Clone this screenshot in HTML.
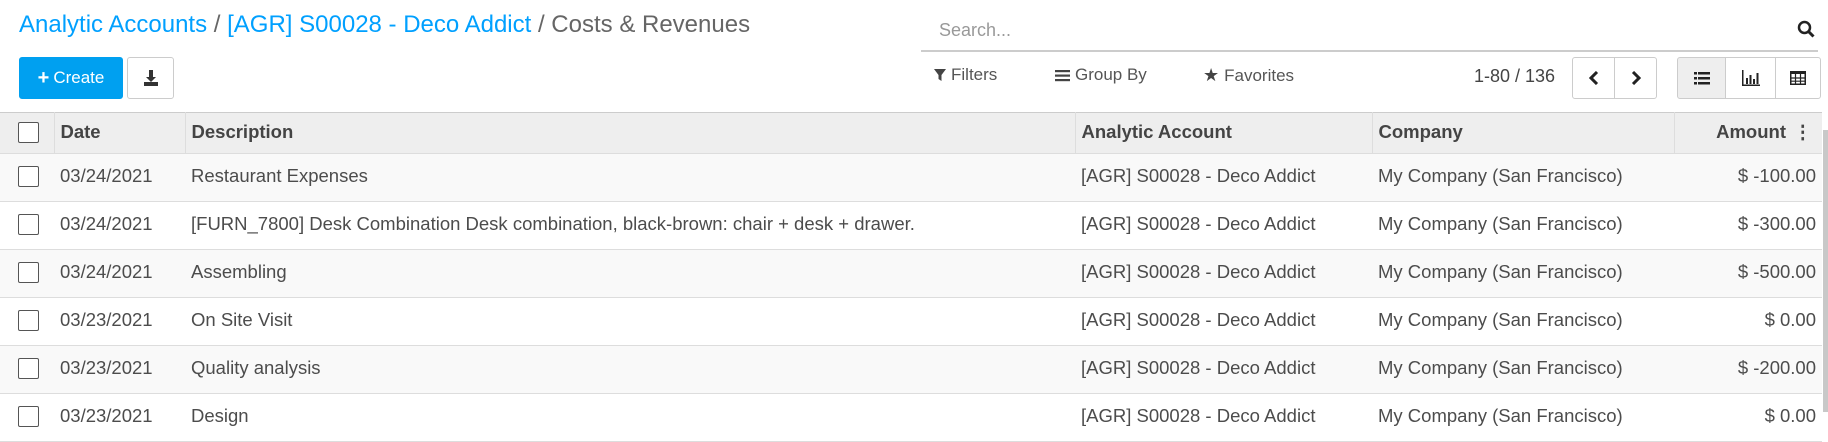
<!DOCTYPE html>
<html><head><meta charset="utf-8"><style>
*{box-sizing:border-box;margin:0;padding:0}
body{width:1828px;height:412px;overflow:hidden;background:#fff;font-family:"Liberation Sans",sans-serif;color:#4c4c4c;position:relative}
.a{position:absolute;white-space:nowrap}
.bc{left:19px;top:11px;font-size:24px;color:#666}
.bc .l{color:#00a0ff}
.btn{position:absolute;border:1px solid #ccc;border-radius:3px;background:#fff;display:flex;align-items:center;justify-content:center}
.fb{font-size:17px;color:#555;top:65px;display:flex;align-items:center;gap:5px}
table{position:absolute;left:0;top:112px;width:1822px;border-collapse:collapse;font-size:18.5px}
th{background:#eee;height:41px;text-align:left;font-weight:bold;border-right:1px solid #ddd;border-top:1px solid #ccc;border-bottom:1px solid #ddd;padding-left:6px;color:#444;padding-bottom:2px}
td{height:48px;border-bottom:1px solid #ddd;padding-left:6px;padding-bottom:3px}
tbody tr:nth-child(odd){background:#f9f9f9}
.cb{display:inline-block;width:21px;height:21px;border:1.5px solid #555;border-radius:2px;background:#fff;vertical-align:middle}
</style></head><body>
<div class="a bc"><span class="l">Analytic Accounts</span> / <span class="l">[AGR] S00028 - Deco Addict</span> / Costs &amp; Revenues</div>
<div class="btn" style="left:19px;top:57px;width:104px;height:42px;background:#00a0f0;border-color:#00a0f0;color:#fff;font-size:17px"><b style="font-size:20px;margin-right:4px">+</b>Create</div>
<div class="btn" style="left:127px;top:57px;width:47px;height:42px"><svg width="16" height="18" viewBox="0 0 16 18"><path d="M6 1h4v7h3l-5 5-5-5h3z" fill="#333"/><rect x="1" y="13" width="14" height="4" fill="#333"/></svg></div>
<div class="a" style="left:939px;top:20px;font-size:18px;color:#999">Search...</div>
<svg class="a" style="left:1797px;top:20px" width="18" height="18" viewBox="0 0 18 18"><circle cx="7.5" cy="7.5" r="5.5" stroke="#222" stroke-width="2.5" fill="none"/><path d="M11.5 11.5l5 5" stroke="#222" stroke-width="3"/></svg>
<div class="a" style="left:921px;top:50px;width:897px;height:1.5px;background:#ccc"></div>
<div class="a fb" style="left:934px"><svg width="12" height="14"><path d="M0 1h12L7.5 7v6L4.5 11V7z" fill="#444"/></svg>Filters</div>
<div class="a fb" style="left:1055px"><svg width="15" height="13"><g fill="#444"><rect y="1" width="15" height="2.2"/><rect y="5.5" width="15" height="2.2"/><rect y="10" width="15" height="2.2"/></g></svg>Group By</div>
<div class="a fb" style="left:1203px"><span style="color:#444;font-size:18px">★</span>Favorites</div>
<div class="a" style="left:1474px;top:66px;font-size:18px;color:#444">1-80 / 136</div>
<div class="btn" style="left:1572px;top:57px;width:43px;height:42px;border-radius:3px 0 0 3px"><svg width="10" height="14"><path d="M8 1L2 7l6 6" stroke="#222" stroke-width="3" fill="none"/></svg></div>
<div class="btn" style="left:1614px;top:57px;width:43px;height:42px;border-radius:0 3px 3px 0"><svg width="10" height="14"><path d="M2 1l6 6-6 6" stroke="#222" stroke-width="3" fill="none"/></svg></div>
<div class="btn" style="left:1677px;top:57px;width:49px;height:42px;background:#eee;border-radius:3px 0 0 3px"><svg width="16" height="14"><g fill="#222"><rect x="0" y="1" width="3" height="2.5"/><rect x="4" y="1" width="12" height="2.5"/><rect x="0" y="6" width="3" height="2.5"/><rect x="4" y="6" width="12" height="2.5"/><rect x="0" y="11" width="3" height="2.5"/><rect x="4" y="11" width="12" height="2.5"/></g></svg></div>
<div class="btn" style="left:1725px;top:57px;width:51px;height:42px;border-radius:0"><svg width="18" height="16"><g fill="#222"><rect x="0" y="0" width="1.5" height="16"/><rect x="0" y="14.5" width="18" height="1.5"/><rect x="4" y="8" width="2" height="6"/><rect x="7.5" y="5" width="2" height="9"/><rect x="11" y="9" width="2" height="5"/><rect x="14.5" y="3" width="2" height="11"/></g></svg></div>
<div class="btn" style="left:1775px;top:57px;width:46px;height:42px;border-radius:0 3px 3px 0"><svg width="16" height="14"><rect x="0.75" y="0.75" width="14.5" height="12.5" fill="none" stroke="#222" stroke-width="1.5"/><rect x="0" y="0" width="16" height="3" fill="#222"/><path d="M5.5 0v14M10.5 0v14M0 7h16M0 10.2h16" stroke="#222" stroke-width="1.2"/></svg></div>
<table>
<thead><tr><th style="width:54px;padding-left:18px"><span class="cb"></span></th><th style="width:131px">Date</th><th style="width:890px">Description</th><th style="width:297px">Analytic Account</th><th style="width:302px">Company</th><th style="text-align:right;padding-right:36px;border-right:none">Amount<span style="position:absolute;right:10px;font-weight:bold">⋮</span></th></tr></thead>
<tbody>
<tr><td style="padding-left:18px"><span class="cb"></span></td><td>03/24/2021</td><td>Restaurant Expenses</td><td>[AGR] S00028 - Deco Addict</td><td>My Company (San Francisco)</td><td style="text-align:right;padding-right:6px">$ -100.00</td></tr>
<tr><td style="padding-left:18px"><span class="cb"></span></td><td>03/24/2021</td><td>[FURN_7800] Desk Combination Desk combination, black-brown: chair + desk + drawer.</td><td>[AGR] S00028 - Deco Addict</td><td>My Company (San Francisco)</td><td style="text-align:right;padding-right:6px">$ -300.00</td></tr>
<tr><td style="padding-left:18px"><span class="cb"></span></td><td>03/24/2021</td><td>Assembling</td><td>[AGR] S00028 - Deco Addict</td><td>My Company (San Francisco)</td><td style="text-align:right;padding-right:6px">$ -500.00</td></tr>
<tr><td style="padding-left:18px"><span class="cb"></span></td><td>03/23/2021</td><td>On Site Visit</td><td>[AGR] S00028 - Deco Addict</td><td>My Company (San Francisco)</td><td style="text-align:right;padding-right:6px">$ 0.00</td></tr>
<tr><td style="padding-left:18px"><span class="cb"></span></td><td>03/23/2021</td><td>Quality analysis</td><td>[AGR] S00028 - Deco Addict</td><td>My Company (San Francisco)</td><td style="text-align:right;padding-right:6px">$ -200.00</td></tr>
<tr><td style="padding-left:18px"><span class="cb"></span></td><td>03/23/2021</td><td>Design</td><td>[AGR] S00028 - Deco Addict</td><td>My Company (San Francisco)</td><td style="text-align:right;padding-right:6px">$ 0.00</td></tr>
</tbody></table>
<div class="a" style="left:1823px;top:130px;width:5px;height:282px;background:#c8c8c8"></div>
</body></html>
